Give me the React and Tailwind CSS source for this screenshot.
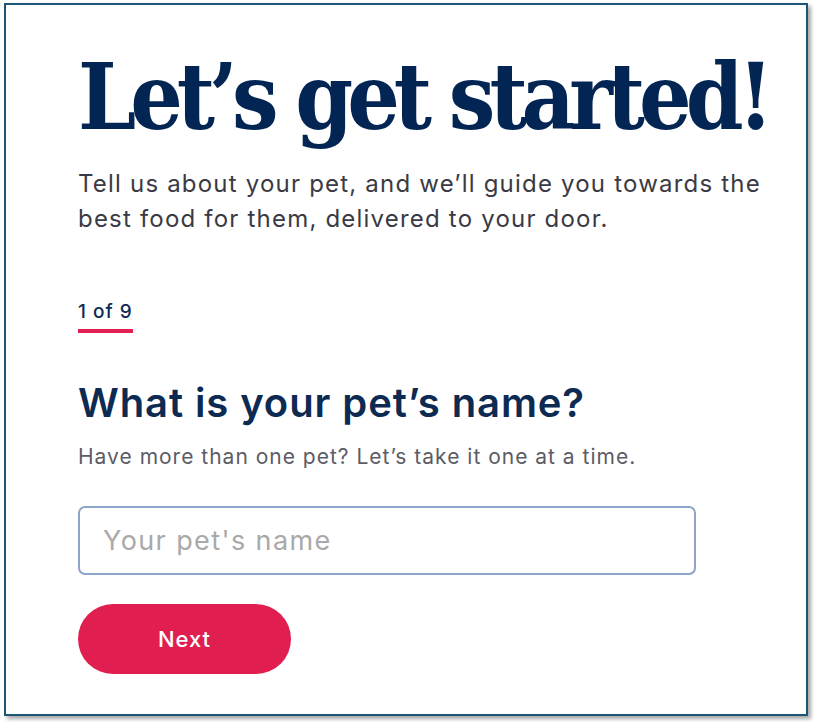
import React from "react";

export default function App() {
  return (
    <div className="min-h-[722px] w-[814px] bg-white pl-[4px] pt-[3px]">
      <div className="box-border flex h-[713px] w-[804px] flex-col items-start border-2 border-[#1d5577] bg-white pl-[72px] pt-[46px] shadow-[3px_3px_4px_rgba(0,0,0,0.35)]">
        <h1 className="whitespace-nowrap text-[92px] font-bold leading-none tracking-[-6px] text-[#032553] [font-family:'DejaVu_Serif_Condensed','DejaVu_Serif',serif]">
          Let’s get started!
        </h1>
        <p className="mt-[23px] whitespace-nowrap text-[24px] leading-[35px] tracking-[1.2px] text-[#3a3a44] [font-family:Inter,sans-serif]">
          Tell us about your pet, and we’ll guide you towards the
          <br />
          best food for them, delivered to your door.
        </p>
        <div className="mt-[64px] border-b-4 border-[#e31f52] pb-[5px] text-[19px] font-medium leading-[24px] tracking-[1px] text-[#0c2a52] [font-family:Inter,sans-serif]">
          1 of 9
        </div>
        <h2 className="mt-[46px] whitespace-nowrap text-[40px] font-semibold leading-[48px] tracking-[0.9px] text-[#0c2a52] [font-family:Inter,sans-serif]">
          What is your pet’s name?
        </h2>
        <p className="mt-[16px] whitespace-nowrap text-[21px] leading-[28px] tracking-[1px] text-[#5c5c66] [font-family:Inter,sans-serif]">
          Have more than one pet? Let’s take it one at a time.
        </p>
        <input
          type="text"
          placeholder="Your pet's name"
          className="mt-[35px] block h-[69px] w-[618px] rounded-[7px] border-2 border-[#8ea4c8] bg-white px-[23px] text-[27px] tracking-[1.4px] text-[#333] outline-none placeholder:text-[#a9a9a9] [font-family:Inter,sans-serif]"
        />
        <button className="mt-[29px] flex h-[70px] w-[213px] items-center justify-center rounded-full bg-[#e01f50] text-[22px] font-medium tracking-[1px] text-white [font-family:Inter,sans-serif]">
          Next
        </button>
      </div>
    </div>
  );
}
